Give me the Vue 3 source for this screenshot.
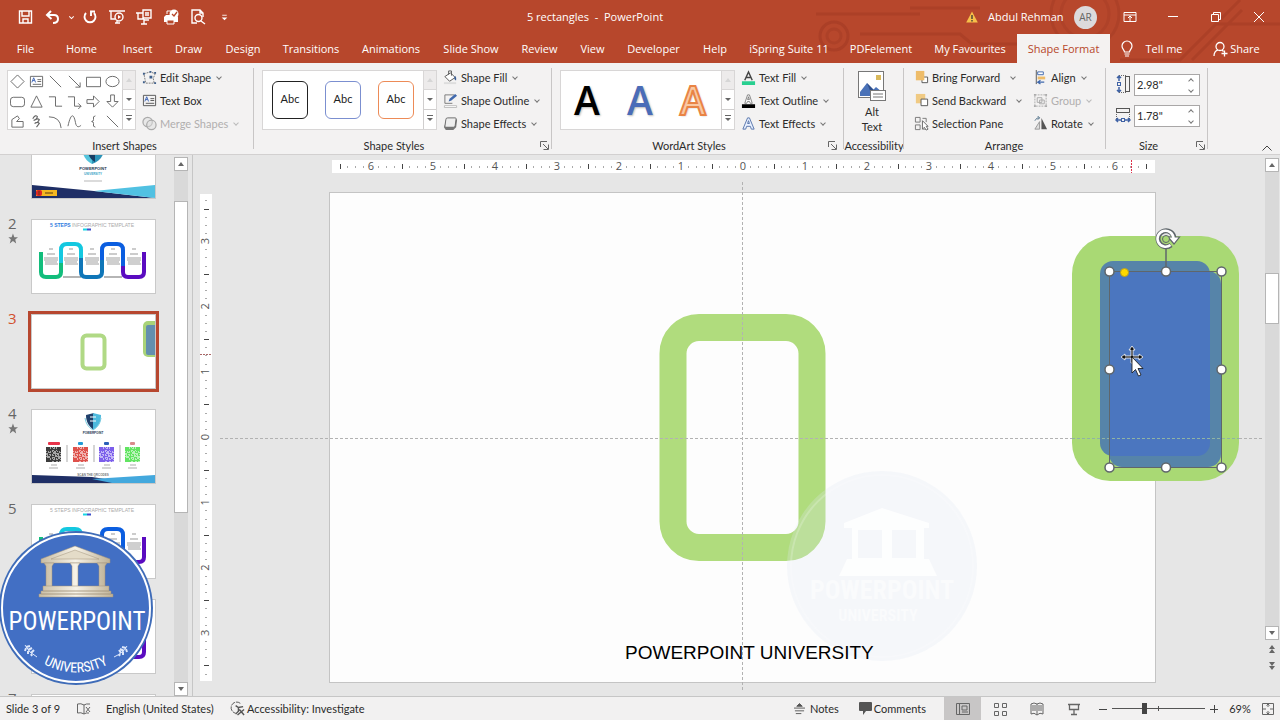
<template>
  <div class="app">
    <header class="title-area">
      <svg class="circuit" viewBox="0 0 480 63" fill="none" stroke="#983520" stroke-width="3" aria-hidden="true">
        <path d="M16 14H120M60 34H160l12 10H240M110 8h70M320 60H380l36-36h64M392 60l50-50M440 0l-20 20" opacity=".35" />
        <circle cx="34" cy="36" r="14" opacity=".4" />
        <circle cx="34" cy="36" r="7" opacity=".3" />
        <circle cx="285" cy="14" r="34" opacity=".3" />
        <circle cx="285" cy="14" r="24" opacity=".25" />
      </svg>

      <div class="title-bar">
        <div class="quick-access">
          <button v-for="q in quickAccess" :key="q.label" :class="q.size" :aria-label="q.label">
            <svg viewBox="0 0 16 16" v-html="q.icon"></svg>
          </button>
        </div>
        <div class="doc-title">5 rectangles&nbsp; -&nbsp; PowerPoint</div>
        <div class="account">
          <svg class="warning" viewBox="0 0 12 12">
            <path d="M6 .5L11.8 11.5H.2Z" fill="#f7c04a" />
            <path d="M6 4v4M6 9v1.5" stroke="#333" stroke-width="1.3" />
          </svg>
          <span class="user">Abdul Rehman</span>
          <span class="avatar">AR</span>
        </div>
        <div class="window-buttons">
          <button v-for="w in windowButtons" :key="w.label" :aria-label="w.label">
            <svg viewBox="0 0 14 14" v-html="w.icon"></svg>
          </button>
        </div>
      </div>

      <nav class="tabs">
        <button
          v-for="tab in tabs"
          :key="tab"
          :class="{ active: tab === activeTab }"
          @click="activeTab = tab"
        >
          {{ tab }}
        </button>
        <button class="tell-me">
          <svg viewBox="0 0 16 18" fill="none" stroke="#fff" stroke-width="1.2">
            <path d="M5.5 12c0-2-2.5-3-2.5-6a5 5 0 0 1 10 0c0 3-2.500 4-2.500 6zM5.500 14h5M6 16h4" />
          </svg>
          Tell me
        </button>
        <button class="share">
          <svg viewBox="0 0 16 16" fill="none" stroke="#fff" stroke-width="1.3">
            <circle cx="8" cy="5.500" r="4" />
            <path d="M2 15c0-4 2-5.500 4-6.200M10 9l1.500 1.500M12.500 9.500v6M9.500 12.500h6" />
          </svg>
          Share
        </button>
      </nav>
    </header>

    <section class="ribbon">
      <div class="group insert-shapes">
        <div class="group-body">
          <div class="gallery">
            <div class="shape-grid">
              <button v-for="(s, i) in shapes" :key="i" aria-label="Shape">
                <svg viewBox="0 0 16 16" fill="none" stroke="#666" v-html="s"></svg>
              </button>
            </div>
            <div class="gallery-scroll">
              <button disabled aria-label="Row up"><i class="up"></i></button>
              <button aria-label="Row down"><i class="down"></i></button>
              <button aria-label="More"><i class="more"></i></button>
            </div>
          </div>
          <div class="commands">
            <button v-for="c in shapeCommands" :key="c.label" :disabled="c.disabled">
              <svg class="icon" viewBox="0 0 16 16" v-html="c.icon"></svg>
              <span>{{ c.label }}</span>
              <i v-if="c.menu" class="chevron"></i>
            </button>
          </div>
        </div>
        <div class="group-label">Insert Shapes</div>
      </div>

      <div class="group shape-styles">
        <div class="group-body">
          <div class="gallery">
            <div class="style-row">
              <button class="style-box black">Abc</button>
              <button class="style-box blue">Abc</button>
              <button class="style-box orange">Abc</button>
            </div>
            <div class="gallery-scroll">
              <button disabled aria-label="Row up"><i class="up"></i></button>
              <button aria-label="Row down"><i class="down"></i></button>
              <button aria-label="More"><i class="more"></i></button>
            </div>
          </div>
          <div class="commands">
            <button v-for="c in styleCommands" :key="c.label">
              <svg class="icon" viewBox="0 0 16 16" v-html="c.icon"></svg>
              <span>{{ c.label }}</span>
              <i class="chevron"></i>
            </button>
          </div>
        </div>
        <div class="group-label">Shape Styles</div>
        <button class="launcher" aria-label="Format Shape">
          <svg viewBox="0 0 9 9" v-html="launcherIcon"></svg>
        </button>
      </div>

      <div class="group wordart">
        <div class="group-body">
          <div class="gallery">
            <div class="style-row letters">
              <button class="letter l-black">A</button>
              <button class="letter l-blue">A</button>
              <button class="letter l-orange">A</button>
            </div>
            <div class="gallery-scroll">
              <button disabled aria-label="Row up"><i class="up"></i></button>
              <button aria-label="Row down"><i class="down"></i></button>
              <button aria-label="More"><i class="more"></i></button>
            </div>
          </div>
          <div class="commands">
            <button v-for="c in textCommands" :key="c.label">
              <svg class="icon" viewBox="0 0 16 16" v-html="c.icon"></svg>
              <span>{{ c.label }}</span>
              <i class="chevron"></i>
            </button>
          </div>
        </div>
        <div class="group-label">WordArt Styles</div>
        <button class="launcher" aria-label="Format Text Effects">
          <svg viewBox="0 0 9 9" v-html="launcherIcon"></svg>
        </button>
      </div>

      <div class="group accessibility">
        <div class="group-body">
          <button class="alt-text">
            <svg viewBox="0 0 30 32">
              <rect x="1.500" y="1.500" width="25" height="26" fill="#fff" stroke="#777" />
              <rect x="19" y="5" width="5" height="5" fill="#d9b95c" />
              <path d="M3 26v-4l7-9 6 7 3-3 6 5v4z" fill="#4a72b8" />
              <path d="M10 13l5 13 2-6z" fill="#2e4f8c" />
              <rect x="13.500" y="20.500" width="15" height="10" fill="#fff" stroke="#777" />
              <path d="M16 24h10M16 27h10" stroke="#777" />
            </svg>
            <span>Alt<br />Text</span>
          </button>
        </div>
        <div class="group-label">Accessibility</div>
      </div>

      <div class="group arrange">
        <div class="group-body">
          <div class="commands order">
            <button v-for="c in orderCommands" :key="c.label">
              <svg class="icon" viewBox="0 0 16 16" v-html="c.icon"></svg>
              <span>{{ c.label }}</span>
              <i v-if="c.menu" class="chevron"></i>
            </button>
          </div>
          <div class="commands">
            <button v-for="c in alignCommands" :key="c.label" :disabled="c.disabled">
              <svg class="icon" viewBox="0 0 16 16" v-html="c.icon"></svg>
              <span>{{ c.label }}</span>
              <i class="chevron"></i>
            </button>
          </div>
        </div>
        <div class="group-label">Arrange</div>
      </div>

      <div class="group size">
        <div class="group-body sizes">
          <div class="size-row">
            <label for="shape-height" aria-label="Shape Height">
              <svg viewBox="0 0 16 18" fill="none">
                <path d="M4 1v5M2 3l2-2 2 2M4 12v5M2 15l2 2 2-2" stroke="#3f62a5" stroke-width="1.500" />
                <rect x="2.500" y="7.500" width="3" height="3" stroke="#3f62a5" />
                <path d="M4 .5h7M4 17.500h7" stroke="#666" stroke-dasharray="1 1" />
                <rect x="10.500" y="1.500" width="4" height="15" stroke="#555" />
              </svg>
            </label>
            <div class="spinner">
              <input id="shape-height" v-model="shapeHeight" type="text" />
              <div><i class="chevron flip"></i><i class="chevron"></i></div>
            </div>
          </div>
          <div class="size-row">
            <label for="shape-width" aria-label="Shape Width">
              <svg viewBox="0 0 16 18" fill="none">
                <rect x="1.500" y="2.500" width="13" height="4" stroke="#555" />
                <path d="M1.500 6v7M14.500 6v7" stroke="#666" stroke-dasharray="1 1" />
                <path d="M1 14h5M3 12l-2 2 2 2M10 14h5M13 12l2 2-2 2" stroke="#3f62a5" stroke-width="1.500" />
                <rect x="6.500" y="12.500" width="3" height="3" stroke="#3f62a5" />
              </svg>
            </label>
            <div class="spinner">
              <input id="shape-width" v-model="shapeWidth" type="text" />
              <div><i class="chevron flip"></i><i class="chevron"></i></div>
            </div>
          </div>
        </div>
        <div class="group-label">Size</div>
        <button class="launcher" aria-label="Size and Position">
          <svg viewBox="0 0 9 9" v-html="launcherIcon"></svg>
        </button>
      </div>

      <button class="collapse" aria-label="Collapse the Ribbon">
        <svg viewBox="0 0 10 6"><path d="M.5 5.500L5 1l4.500 4.500" fill="none" stroke="#444" /></svg>
      </button>
    </section>

    <main class="workspace">
      <aside class="slides-pane">
        <ol class="slides">
          <li v-for="n in 7" :key="n" :class="{ selected: n === currentSlide }">
            <div class="slide-no">
              <span v-if="n > 1 && n !== 6">{{ n }}</span>
              <svg v-if="n === 2 || n === 4" viewBox="0 0 12 12">
                <path d="M6.500.5L8 4.500h4L9 7l1 4.500-3.500-2.700L3 11.500 4.200 7 1.500 4.500H5zM0 5h2M.5 8h2" fill="#777" />
              </svg>
            </div>
            <button class="thumb" :aria-label="'Slide ' + n" @click="currentSlide = n">
              <svg v-if="n === 1" viewBox="0 0 123 73">
                <path d="M50 24h10v15c-6-3-9-8-10-15z" fill="#55c4dc" />
                <path d="M60 24h12c0 7-5 13-12 15z" fill="#2b93b8" />
                <path d="M55 24h8v13c-5-3-7-7-8-13z" fill="#173d63" />
                <text x="61" y="45" class="t-bold" font-size="4">POWERPOINT</text>
                <text x="61" y="50" class="t-bold t-cyan" font-size="3">UNIVERSITY</text>
                <path d="M52 56h18" stroke="#888" stroke-width=".6" />
                <path d="M0 60l62 6 61 7H0z" fill="#1f2f66" />
                <path d="M62 66l61-6v13z" fill="#51c1e2" />
                <rect x="4" y="65" width="21" height="6" fill="#f5b821" />
                <rect x="4" y="65" width="6" height="6" rx="2" fill="#e02424" />
                <path d="M7 66v4M13 68h8" stroke="#5a3a12" />
              </svg>

              <svg v-else-if="n === 2 || n === 5 || n === 6" viewBox="0 0 123 73">
                <text x="60" y="7" class="t-title" fill="#aaa">
                  <tspan :fill="n === 2 ? '#2f7de0' : '#aaa'" :font-weight="n === 2 ? 700 : 400">5 STEPS</tspan>
                  INFOGRAPHIC TEMPLATE
                </text>
                <path d="M51 9.500h4" stroke="#18d6e5" stroke-width="2" />
                <path d="M55 9.500h4" stroke="#3d4fc8" stroke-width="2" />
                <path d="M31 57h18M72 57h18" stroke="#b5b5b5" stroke-width="2" />
                <g fill="none" stroke-width="4">
                  <path d="M9 32v20q0 5 5 5h10q5 0 5-5v-10" stroke="#12bd7c" />
                  <path d="M29 43V30q0-6 6-6h8q6 0 6 6v10" stroke="#14c8e0" />
                  <path d="M49 38v14q0 5 5 5h11q5 0 5-5V38" stroke="#0f76b8" />
                  <path d="M70 40V30q0-6 6-6h9q6 0 6 6v18" stroke="#0b5ee0" />
                  <path d="M91 46v6q0 5 5 5h11q5 0 5-5V32" stroke="#5a0bc0" />
                </g>
                <g v-for="x in [12, 32, 53, 74, 95]" :key="x" fill="none">
                  <path :d="`M${x + 5} 29h4M${x + 3} 34h8`" stroke="#999" />
                  <path :d="`M${x} 38h14M${x} 40h14M${x + 1} 42h12M${x + 1} 44h13`" stroke="#777" stroke-width=".7" />
                </g>
              </svg>

              <svg v-else-if="n === 3" viewBox="0 0 123 73">
                <rect x="50.500" y="20.500" width="22" height="33" rx="4" fill="none" stroke="#b0d985" stroke-width="4" />
                <rect x="111" y="6" width="24" height="36" rx="5" fill="#a9d378" />
                <rect x="114" y="10" width="20" height="30" rx="2" fill="#638fae" />
              </svg>

              <svg v-else-if="n === 4" viewBox="0 0 123 73">
                <path d="M54 5l8-2v17c-6-4-8-9-8-15z" fill="#1f3f6b" />
                <path d="M61 3l8 2c0 7-2 11-8 15z" fill="#4db9dd" />
                <path d="M58 7h6M58 11h6" stroke="#fff" />
                <path d="M53 8q1 8 8 12 7-4 8-12" stroke="#79cbe0" fill="none" />
                <text x="61" y="24" class="t-bold" font-size="3">POWERPOINT</text>
                <g v-for="qr in qrCodes" :key="qr.x" :transform="`translate(${qr.x} 37)`">
                  <rect :x="qr.x === 14 ? 2 : 5" y="-5" :width="qr.x === 14 ? 12 : 5" height="3" rx="1" :fill="qr.tag" />
                  <rect width="15" height="15" :fill="qr.color" opacity=".4" />
                  <path :d="qrPath" :fill="qr.color" opacity=".8" />
                  <path d="M5 18h6M3 21h9" stroke="#888" stroke-width=".7" />
                </g>
                <path d="M35 35v17M62 35v17M88 35v17" stroke="#888" stroke-width=".7" />
                <text x="61" y="66" class="t-bold t-gray" font-size="3">SCAN THE QRCODES</text>
                <path d="M0 65l60 2 40 6H0z" fill="#1f2f66" />
                <path d="M60 69l63-4v8H80z" fill="#43a8dd" />
              </svg>
            </button>
          </li>
        </ol>
        <div class="scrollbar pane-scroll">
          <button aria-label="Scroll up"><i class="up"></i></button>
          <div class="track"><div class="handle"></div></div>
          <button aria-label="Scroll down"><i class="down"></i></button>
        </div>
      </aside>

      <section class="editor">
        <div class="ruler-h">
          <svg viewBox="0 0 826 13">
            <rect x="3" width="823" height="13" fill="#fff" />
            <path :d="hDots" stroke="#aaa" />
            <path :d="hTicks" stroke="#444" />
            <text v-for="n in 13" :key="n" :x="414 + (n - 7) * 62" y="10">{{ Math.abs(n - 7) }}</text>
            <path d="M802.500 0v13" stroke="#e0304a" stroke-dasharray="2 1" />
          </svg>
        </div>
        <div class="ruler-v">
          <svg viewBox="0 0 12 487">
            <rect width="12" height="487" fill="#fff" />
            <path :d="vDots" stroke="#aaa" />
            <path :d="vTicks" stroke="#444" />
            <text
              v-for="n in 7"
              :key="n"
              :transform="`translate(9 ${243 + (n - 4) * 65.3}) rotate(-90)`"
            >
              {{ Math.abs(n - 4) }}
            </text>
            <path d="M0 160.500h12" stroke="#a66" stroke-dasharray="2 1" />
          </svg>
        </div>
        <div class="stage">
          <svg class="slide" viewBox="0 0 826 490">
            <defs>
              <clipPath id="back-shape">
                <rect x="771" y="69" width="110" height="195" rx="13" />
              </clipPath>
            </defs>
            <rect x=".5" y=".5" width="826" height="490" fill="#fdfdfd" stroke="#c4c4c4" />

            <rect x="344" y="135.500" width="139" height="220" rx="26" fill="none" stroke="#b0dc7d" stroke-width="27" />
            <rect x="743" y="44" width="167" height="245" rx="38" fill="#a9d974" />
            <g fill="#5684a9">
              <rect x="771" y="69" width="110" height="195" rx="13" />
              <rect x="780" y="79" width="112" height="196" rx="13" />
            </g>
            <rect x="780" y="79" width="112" height="196" rx="13" fill="#4b76bf" clip-path="url(#back-shape)" />

            <!-- drawing guides -->
            <g fill="none" stroke="#b2b2b2" stroke-dasharray="3 2">
              <path d="M-109 246.500H743M910 246.500H935M413.500-10V498" />
              <path d="M743 246.500H910" stroke="#8fb3a4" />
            </g>

            <!-- watermark -->
            <g>
              <circle cx="553" cy="374" r="95" fill="#dfe7f3" opacity=".26" />
              <circle cx="553" cy="374" r="91" fill="none" stroke="#fff" stroke-width="2" opacity=".2" />
              <path
                d="M515 331l38-15 47 15v5h-5v31h5l8 17h-98l8-17h5v-31h-8zM529 338v28h24v-28zM563 338v28h24v-28z"
                fill="#fff"
                fill-rule="evenodd"
                opacity=".8"
              />
              <text x="553" y="407" class="mark" font-size="26">POWERPOINT</text>
              <text x="549" y="429" class="mark" font-size="16">UNIVERSITY</text>
            </g>

            <text x="296" y="467" class="caption">POWERPOINT UNIVERSITY</text>

            <!-- selection frame -->
            <g fill="none" stroke="#5f666b">
              <rect x="780.500" y="79.500" width="112" height="196" />
              <path d="M837 79V56" stroke-width="1.500" />
              <circle v-for="h in handles" :key="h.x + '-' + h.y" :cx="h.x" :cy="h.y" r="4.500" fill="#fff" stroke-width="1.500" />
              <circle cx="795.500" cy="80.500" r="4" fill="#ffd900" stroke="#b8a020" />
            </g>

            <!-- rotate handle: dark outline under a white arrow -->
            <g fill="none">
              <path d="M842 53a8 8 0 1 1 3-7" stroke="#5f666b" stroke-width="5" />
              <path d="M839 45h11.500l-5.500 7z" fill="#fff" stroke="#5f666b" stroke-width="1.200" />
              <path d="M841.500 53a8 8 0 1 1 3-7" stroke="#fff" stroke-width="2.600" />
              <circle cx="837" cy="47" r="3.500" fill="#a9d974" stroke="#5f666b" />
            </g>

            <!-- move pointer -->
            <g stroke="#fff" stroke-width=".8">
              <path
                d="M803 154l3 4h-2v6h6v-2l4 3-4 3v-2h-6v5h-2v-5h-6v2l-4-3 4-3v2h6v-6h-2z"
                fill="#111"
              />
              <path d="M803 165v16l3.500-3.500 3 6.500 2.500-1-3-6.500h5z" fill="#fff" stroke="#111" />
            </g>
          </svg>
        </div>
      </section>

      <div class="scrollbar canvas-scroll">
        <button aria-label="Scroll up"><i class="up"></i></button>
        <div class="track"><div class="handle"></div></div>
        <button aria-label="Scroll down"><i class="down"></i></button>
        <button class="page" aria-label="Previous Slide"><i class="up"></i><i class="up"></i></button>
        <button class="page" aria-label="Next Slide"><i class="down"></i><i class="down"></i></button>
      </div>

      <svg class="channel-logo" viewBox="0 0 154 156">
        <defs>
          <path id="logo-arc" d="M40 132Q76 153 112 132" />
          <linearGradient id="stone" x1="0" x2="1">
            <stop offset="0" stop-color="#c9bda4" />
            <stop offset=".5" stop-color="#f7f3e8" />
            <stop offset="1" stop-color="#bfb297" />
          </linearGradient>
        </defs>
        <circle cx="76" cy="78" r="77" fill="#3f6cb8" />
        <circle cx="76" cy="78" r="74" fill="#426fc4" stroke="#fff" stroke-width="2" />
        <g fill="url(#stone)" stroke="#a0937a" stroke-width=".5">
          <path d="M75 16l35 13v4H41v-4z" />
          <path d="M75 20l24 9H51z" fill="#e4dcc8" />
          <path d="M44 33h10l-2 3v21h-6V36zM70 33h10l-2 3v21h-6V36zM97 33h10l-2 3v21h-6V36z" />
          <path d="M43 56h66v5H43zM41 61h70v3H41zM39 64h74v3H39z" />
        </g>
        <text x="77" y="100" class="logo-name">POWERPOINT</text>
        <text class="logo-sub"><textPath href="#logo-arc" startOffset="50%">UNIVERSITY</textPath></text>
        <g stroke="#dce6fa" stroke-width="1" fill="none">
          <path d="M25 115q4 8 12 12M127 116q-4 7-13 11" />
          <path
            d="M26 117l4-1M28 120l4-2M31 123l3-3M26 118l-1 3M28 121l0 3M31 124l1 2M126 118l-4-1M124 121l-4-2M121 123l-2-3M126 119l1 3M123 122l0 3M120 124l-1 2"
            stroke-width="2"
          />
        </g>
      </svg>
    </main>

    <footer class="status-bar">
      <span class="page-count">Slide 3 of 9</span>
      <button class="spell" aria-label="Spelling">
        <svg viewBox="0 0 14 14" fill="none" stroke="#666">
          <path d="M7 3v9M7 3Q4 1 .5 2v9Q4 10 7 12M7 3q2-1.500 6-1M7 12q2-1.500 5-1M9 5l4 5M13 5L9 10" />
        </svg>
      </button>
      <button class="language">English (United States)</button>
      <button class="check">
        <svg viewBox="0 0 16 16" fill="none" stroke="#555">
          <path d="M11 2.500A6 6 0 1 0 6 13" stroke-dasharray="5 1" />
          <path d="M6 5l3 2 5-1M9 7v4l-3 3M10 9l5 6M15 9l-7 6" stroke-width="1.500" />
        </svg>
        Accessibility: Investigate
      </button>
      <button class="notes">
        <svg viewBox="0 0 12 12"><path d="M6 0l3 3H3zM0 5h12M1 8h10M2 11h6" fill="#555" stroke="#555" /></svg>
        Notes
      </button>
      <button class="comments">
        <svg viewBox="0 0 13 13"><path d="M1 0h11q1 0 1 1v7q0 1-1 1H7l-3 4V9H1Q0 9 0 8V1q0-1 1-1z" fill="#555" /></svg>
        Comments
      </button>
      <div class="views">
        <button v-for="v in views" :key="v.label" :class="{ on: v.on }" :aria-label="v.label">
          <svg viewBox="0 0 14 14" fill="none" stroke="#666" v-html="v.icon"></svg>
        </button>
      </div>
      <div class="zoom">
        <button aria-label="Zoom out"><svg viewBox="0 0 8 8"><path d="M0 4.500h8" stroke="#444" /></svg></button>
        <input v-model="zoomPos" type="range" min="0" max="100" aria-label="Zoom" />
        <button aria-label="Zoom in"><svg viewBox="0 0 8 8"><path d="M0 4.500h8M4.500 0v8" stroke="#444" /></svg></button>
        <button class="percent">69%</button>
        <button aria-label="Fit slide to window">
          <svg class="fit" viewBox="0 0 12 12" fill="none" stroke="#666">
            <path d="M.5.5h11v11H.5zM6 1v3M6 8v3M1 6h3M8 6h3M4.500 2.500L6 1l1.500 1.500M4.500 9.500L6 11l1.500-1.500" />
          </svg>
        </button>
      </div>
    </footer>
  </div>
</template>

<script setup>
import { ref } from "vue";

const activeTab = ref("Shape Format");
const currentSlide = ref(3);
const shapeHeight = ref('2.98"');
const shapeWidth = ref('1.78"');
const zoomPos = ref(34);

const tabs = [
  "File",
  "Home",
  "Insert",
  "Draw",
  "Design",
  "Transitions",
  "Animations",
  "Slide Show",
  "Review",
  "View",
  "Developer",
  "Help",
  "iSpring Suite 11",
  "PDFelement",
  "My Favourites",
  "Shape Format",
];

const line = 'fill="none" stroke="#fff" stroke-width="1.4"';

const quickAccess = [
  { label: "Save", icon: `<path d="M1.500 2h12v12h-12zM4 2v5h7V2M5 14v-4h5v4" ${line}/>` },
  { label: "Undo", icon: '<path d="M6 2L2 6l4.500 4M2.500 6H9q4 0 4 4t-5 4" fill="none" stroke="#fff" stroke-width="2"/>' },
  { label: "Undo menu", size: "narrow", icon: '<path d="M4 6l4 4 4-4" fill="none" stroke="#fff" stroke-width="1.8"/>' },
  { label: "Redo", icon: '<path d="M4 4a5.500 5.500 0 1 0 8 0M13 2.500H9V7" fill="none" stroke="#fff" stroke-width="1.900"/>' },
  { label: "From Beginning", icon: `<path d="M0 2h16M2 2v8h4M6 14h5M8 12v2" ${line}/><circle cx="10" cy="8" r="4" ${line}/><path d="M9 6l3 2-3 2z" fill="#fff"/>` },
  { label: "From Current Slide", icon: `<path d="M0 4h7M2 4v6h6M5 15h6M8 10v5M7 1h8v8H7zM9 4h4M9 6h4M8 11h5" ${line}/>` },
  { label: "Quick Print", icon: `<path d="M3 6h10l2 2v5H1V8z" fill="#fff"/><path d="M4 5V2h4M4 11h7v4H4z" fill="#b7472a" stroke="#fff"/><circle cx="11" cy="5" r="4.500" fill="#fff"/><path d="M9 5l2 2 3-4" fill="none" stroke="#b7472a" stroke-width="1.300"/>` },
  { label: "Print Preview", icon: `<path d="M7 14H2V1h8l3 3v4M10 1v3h3M11 12l4 3" ${line}/><circle cx="8.500" cy="9" r="3.500" ${line}/>` },
  { label: "Customize", size: "small", icon: '<path d="M4 4h8" stroke="#fff" stroke-width="1.500"/><path d="M3 8h10l-5 5z" fill="#fff"/>' },
];

const windowButtons = [
  { label: "Ribbon Display Options", icon: '<path d="M1 2.500h12v9H1zM1 5h12M7 11V6M5 8l2-2 2 2" fill="none" stroke="#fff"/>' },
  { label: "Minimize", icon: '<path d="M2 6.500h10" stroke="#fff"/>' },
  { label: "Restore", icon: '<path d="M2.500 4.500h7v7h-7zM4.500 4V2.500h7v7H10" fill="none" stroke="#fff"/>' },
  { label: "Close", icon: '<path d="M2 2l10 10M12 2L2 12" stroke="#fff"/>' },
];

const shapes = [
  '<path d="M8 1l7 7-7 7-7-7z"/>',
  '<path d="M1.500 2.500h13v11h-13zM9 6h4M9 8h4M4 11h9"/><path d="M3 9l2-5 2 5M4 7h2" stroke="#3b62b5"/>',
  '<path d="M2 2l12 12"/>',
  '<path d="M2 2l12 12M14 9v5H9"/>',
  '<path d="M.5 3.500h15v10H.5z"/>',
  '<ellipse cx="8" cy="8" rx="7" ry="5.500"/>',
  '<rect x=".5" y="3.500" width="15" height="10" rx="3"/>',
  '<path d="M8 2l6 12H2z"/>',
  '<path d="M1 3h7v10h7"/>',
  '<path d="M1 3h7v10h7M12 10l3 3-3 3"/>',
  '<path d="M1 6h7V2l6 6-6 6v-4H1z"/>',
  '<path d="M6 1v7H2l6 6 6-6h-4V1z"/>',
  '<path d="M2 14V6l6-4 2 3-3 3h7v6z"/>',
  '<path d="M4 5q3-5 5-2-1 3-4 4 4-3 6-1-1 3-5 4 3-2 5 0l-3 4" stroke-width="1.200"/>',
  '<path d="M1 3q12 0 13 12"/>',
  '<path d="M1 13C5-5 8 3 9 9s4 5 6 3"/>',
  '<path d="M10 2Q7 2 8 6q0 2-2 2 2 0 2 2-1 4 2 4"/>',
  '<path d="M2 2l12 12"/>',
];

const shapeCommands = [
  { label: "Edit Shape", menu: true, icon: '<path d="M2 4l7-2 5 2-2 5 1 5H4z" fill="none" stroke="#777" stroke-dasharray="2 1"/><path d="M1 3h2v2H1zM8 1h2v2H8zM13 2h2v2h-2zM1 12h2v2H1zM13 13h2v2h-2zM8 6h3v3H8z" fill="#3f5f8a"/>' },
  { label: "Text Box", icon: '<path d="M1.500 2.500h13v11h-13zM9 6h4M9 8h4M4 11h9" fill="none" stroke="#555"/><path d="M3 9l2-5 2 5M4 7h2" fill="none" stroke="#3b62b5"/>' },
  { label: "Merge Shapes", menu: true, disabled: true, icon: '<g fill="#ddd" fill-opacity=".5" stroke="#aaa" stroke-width="1.300"><circle cx="6" cy="6.500" r="5"/><circle cx="10" cy="9.500" r="5"/></g>' },
];

const styleCommands = [
  { label: "Shape Fill", icon: '<path d="M2 7l6-4 5 5-6 4zM6 5V1h3v5" fill="#fff" stroke="#555"/><path d="M13 6q2 3 1 5-2 0-2-3z" fill="#3b5e96"/><path d="M1 13h13v2H1z" fill="#ddd"/>' },
  { label: "Shape Outline", icon: '<path d="M12 2H2v9h8" fill="none" stroke="#777"/><path d="M6 9l1-3 6-5 2 2-6 5z" fill="#4069ad"/><path d="M1.500 13.500h13v2h-13z" fill="#fff" stroke="#bbb"/>' },
  { label: "Shape Effects", icon: '<path d="M4 4l8-2 3 2-1 8-3 3H3l-2-3z" fill="#777"/><path d="M5 2h8q1 0 1 1l-1 7q0 2-2 2H3q-1 0-1-1l1-7q0-2 2-2z" fill="#eee" stroke="#666"/>' },
];

const textCommands = [
  { label: "Text Fill", icon: '<path d="M1 12h14v4H1z" fill="#29cf90"/><path d="M4 11l4-9 4 9M5.500 8h5" fill="none" stroke="#444" stroke-width="1.500"/>' },
  { label: "Text Outline", icon: '<path d="M1 12h14v4H1z" fill="#000"/><path d="M4 11l3-9h2l3 9h-2l-1-2H7l-1 2zM7 7h2L8 4z" fill="#fff" stroke="#666" stroke-width=".8"/>' },
  { label: "Text Effects", icon: '<path d="M2 14L7 2h2l5 12h-3l-1-3H6l-1 3zM7 8h2L8 5z" fill="#e8f0ff" stroke="#5674ab"/>' },
];

const orderCommands = [
  { label: "Bring Forward", menu: true, icon: '<path d="M8.500 7.500h6v6h-6z" fill="#fff" stroke="#555"/><path d="M2 1h9v10H2z" fill="#eebc69"/>' },
  { label: "Send Backward", menu: true, icon: '<path d="M2 1h10v10H2z" fill="#f0ca83"/><path d="M7.500 6.500h7v7h-7z" fill="#fff" stroke="#555"/>' },
  { label: "Selection Pane", icon: '<path d="M1.500 1.500h5v5h-5zM1.500 9.500h5v5h-5zM9 2.500h4v4M9 14h4" fill="none" stroke="#777"/><path d="M9 5v9l2-2 2 3 2-1-2-3h2z" fill="#fff" stroke="#666"/>' },
];

const alignCommands = [
  { label: "Align", icon: '<path d="M3.500 0v15" stroke="#555"/><path d="M5 2h6v3H5z" fill="#fff" stroke="#4069ad"/><path d="M5 7h8v3H5z" fill="#eebc69"/><path d="M5 13h7M8 11l-3 2 3 2" fill="none" stroke="#4069ad" stroke-width="1.300"/>' },
  { label: "Group", disabled: true, icon: '<path d="M2 2h12v12H2z" fill="none" stroke="#aaa" stroke-dasharray="2 1"/><path d="M4.500 5h5v5h-5zM7 7.500h5v4H7z" fill="none" stroke="#aaa"/><path d="M1 1h2v2H1zM13 1h2v2h-2zM1 13h2v2H1zM13 13h2v2h-2z" fill="#aaa"/>' },
  { label: "Rotate", icon: '<path d="M2 14L7 6v8z" fill="#ddd" stroke="#999"/><path d="M9 2v12h6z" fill="#555"/><path d="M2 5q2-4 5-3M5 0l2 2-2 2" fill="none" stroke="#4f6f87"/>' },
];

const launcherIcon = '<path d="M.5 6V.5H7M3 3l5 5M8.500 3.500v5h-5" fill="none" stroke="#666"/>';

const views = [
  { label: "Normal", on: true, icon: '<path d="M.5 1.500h13v11H.5zM3.500 2v10M6 4h5v4H6zM6 10h6"/>' },
  { label: "Slide Sorter", icon: '<path d="M1.500 1.500h4v4h-4zM9.500 1.500h4v4h-4zM1.500 9.500h4v4h-4zM9.500 9.500h4v4h-4z"/>' },
  { label: "Reading View", icon: '<path d="M7 2v11M7 2Q4 0 1 2v10q3-2 6 1 3-3 6-1V2Q10 0 7 2M2 4h4M2 6h4M2 8h4M8 4h4M8 6h4M8 8h4"/>' },
  { label: "Slide Show", icon: '<path d="M1 2.500h12M2.500 2.500v5h9v-5M7 8v4M4 12.500h6" stroke-width="1.300"/>' },
];

const handles = [
  { x: 780.5, y: 79.5 },
  { x: 837, y: 79.5 },
  { x: 892.5, y: 79.5 },
  { x: 780.5, y: 177.5 },
  { x: 892.5, y: 177.5 },
  { x: 780.5, y: 275.5 },
  { x: 837, y: 275.5 },
  { x: 892.5, y: 275.5 },
];

const qrCodes = [
  { x: 14, color: "#222222", tag: "#e8344a" },
  { x: 41, color: "#d93a32", tag: "#229bd6" },
  { x: 67, color: "#6a48e8", tag: "#2b5fb8" },
  { x: 93, color: "#4be04b", tag: "#d98b8b" },
];

// small block pattern shared by all the codes
let qrPath = "";
for (let r = 0; r < 15; r++) {
  for (let c = 0; c < 15; c++) {
    const corner = (r < 4 || r > 10) && (c < 4 || c > 10) && !(r > 10 && c > 10);
    if (corner || (r * 7 + c * 5 + r * c * 3) % 11 < 5) {
      qrPath += `M${c} ${r}h1v1h-1z`;
    }
  }
}

// ruler marks: a dot per eighth of an inch, a tick per half
let hDots = "";
let hTicks = "";
for (let i = -52; i <= 52; i++) {
  const x = 413.5 + i * 7.75;
  if (i % 8 === 0) continue;
  if (i % 4 === 0) hTicks += `M${Math.round(x) + 0.5} 4v5`;
  else hDots += `M${Math.round(x) + 0.5} 6v2`;
}

let vDots = "";
let vTicks = "";
for (let i = -29; i <= 29; i++) {
  const y = Math.round(243 + i * 8.16) + 0.5;
  if (i % 8 === 0) continue;
  if (i % 4 === 0) vTicks += `M4 ${y}h5`;
  else vDots += `M5 ${y}h2`;
}
</script>

<style>
body {
  margin: 0;
}
</style>

<style scoped>
* {
  box-sizing: border-box;
}
.app {
  display: flex;
  flex-direction: column;
  height: 100vh;
  overflow: hidden;
  background: #e6e6e6;
  color: #2b2b2b;
  font-family: "Open Sans", "Noto Sans", sans-serif;
  font-size: 11px;
  line-height: 14px;
}
button,
input {
  font: inherit;
  color: inherit;
}
button {
  display: flex;
  align-items: center;
  justify-content: center;
  padding: 0;
  border: 0;
  background: none;
  white-space: nowrap;
}
svg {
  display: block;
  flex: none;
}

/* Title bar */
.title-area {
  position: relative;
  flex: none;
  background: #b7472c;
  color: #fff;
}
.circuit {
  position: absolute;
  top: 0;
  right: 0;
  width: 480px;
  height: 63px;
}
.title-bar {
  position: relative;
  display: flex;
  align-items: center;
  height: 34px;
}
.quick-access {
  display: flex;
  width: 238px;
  padding-left: 12px;
}
.quick-access button {
  width: 27px;
}
.quick-access .narrow {
  width: 10px;
}
.quick-access svg {
  width: 16px;
  height: 16px;
}
.quick-access .narrow svg,
.quick-access .small svg {
  width: 9px;
  height: 9px;
}
.doc-title {
  flex: 1;
  text-align: center;
}
.account {
  display: flex;
  align-items: center;
  gap: 10px;
  width: 142px;
  margin-left: 14px;
}
.warning {
  width: 12px;
  height: 12px;
}
.user {
  flex: 1;
  white-space: nowrap;
}
.avatar {
  width: 23px;
  height: 23px;
  margin-right: 11px;
  border-radius: 50%;
  background: #dcdadc;
  color: #666;
  font-size: 10px;
  line-height: 23px;
  text-align: center;
}
.window-buttons {
  display: flex;
}
.window-buttons button {
  width: 43px;
  height: 30px;
}
.window-buttons svg {
  width: 14px;
  height: 14px;
}

/* Tabs */
.tabs {
  position: relative;
  display: grid;
  grid-template-columns: 51px 61px 51px 51px 58px 78px 82px 78px 59px 47px 75px 48px 100px 84px 94px 93px 82px 1fr;
  height: 29px;
}
.tabs button.active {
  background: #f4f2f1;
  color: #b7472a;
}
.tabs .tell-me {
  gap: 10px;
}
.tabs .share {
  gap: 2px;
}
.tell-me svg {
  width: 16px;
  height: 18px;
}
.share svg {
  width: 16px;
  height: 16px;
}

/* Ribbon */
.ribbon {
  position: relative;
  display: flex;
  flex: none;
  height: 92px;
  background: #f3f2f2;
  border-bottom: 1px solid #d2d0d0;
}
.ribbon,
.status-bar {
  font-family: Lato, "Open Sans", sans-serif;
}
.group {
  position: relative;
  display: flex;
  flex-direction: column;
  justify-content: space-between;
  padding: 3px 0 0;
}
.group::after {
  content: "";
  position: absolute;
  top: 5px;
  right: 0;
  bottom: 5px;
  border-right: 1px solid #c8c6c6;
}
.group-body {
  display: flex;
  height: 70px;
  padding-top: 4px;
  gap: 6px;
}
.group-label {
  text-align: center;
  line-height: 16px;
}
.insert-shapes {
  width: 254px;
  padding-left: 7px;
}
.shape-styles {
  width: 298px;
  padding-left: 8px;
}
.wordart {
  width: 292px;
  padding-left: 8px;
}
.accessibility {
  width: 60px;
}
.arrange {
  width: 202px;
  padding-left: 10px;
}
.size {
  width: 102px;
  padding-left: 9px;
}
.insert-shapes .group-label,
.arrange .group-label {
  padding-right: 12px;
}
.shape-styles .group-label,
.wordart .group-label,
.size .group-label {
  padding-right: 26px;
}
.launcher {
  position: absolute;
  right: 3px;
  bottom: 4px;
}
.wordart .launcher {
  right: 7px;
}
.launcher svg {
  width: 9px;
  height: 9px;
}
.gallery {
  display: flex;
  height: 60px;
  border: 1px solid #d8d6d6;
  background: #fff;
}
.shape-grid {
  display: grid;
  grid-template-columns: repeat(6, 19px);
  grid-auto-rows: 20px;
}
.shape-grid svg {
  width: 15px;
  height: 15px;
}
.gallery-scroll {
  display: grid;
  grid-template-rows: 1fr 1fr 1fr;
  width: 13px;
}
.gallery-scroll button {
  border-left: 1px solid #d0cece;
  border-bottom: 1px solid #d0cece;
}
.gallery-scroll button:disabled {
  background: #e9e7e7;
  opacity: 0.8;
}
.gallery-scroll button:last-child {
  border-bottom: 0;
}
.up,
.down,
.more {
  border: 3px solid transparent;
}
.up {
  border-top: 0;
  border-bottom: 4px solid #666;
}
.down {
  border-bottom: 0;
  border-top: 4px solid #666;
}
.gallery-scroll .up {
  border-bottom-color: #ccc;
}
.gallery-scroll .down,
.more {
  border-bottom: 0;
  border-top: 3px solid #666;
}
.more {
  position: relative;
}
.more::before {
  content: "";
  position: absolute;
  top: -6px;
  left: -3px;
  width: 6px;
  border-top: 1px solid #666;
}
.commands {
  display: flex;
  flex-direction: column;
  height: 69px;
  margin-top: -4px;
}
.commands button {
  flex: none;
  justify-content: flex-start;
  height: 23px;
  gap: 3px;
}
.commands .icon {
  width: 15px;
  height: 15px;
}
button:disabled {
  color: #b1afaf;
}
.chevron {
  width: 4px;
  height: 4px;
  margin: -2px 0 0 3px;
  border: solid #777;
  border-width: 0 1px 1px 0;
  transform: rotate(45deg);
}
button:disabled .chevron {
  border-color: #bbb;
}
.style-row {
  display: flex;
  align-items: center;
  gap: 17px;
  width: 160px;
  padding-left: 9px;
}
.style-box {
  width: 36px;
  height: 38px;
  padding-bottom: 3px;
  border: 1px solid #222;
  border-radius: 6px;
  color: #222;
}
.style-box.blue {
  border-color: #7b8fd0;
}
.style-box.orange {
  border-color: #ed8b57;
}
.letters {
  padding-left: 8px;
}
.letter {
  width: 36px;
  font-family: "Open Sans", sans-serif;
  font-size: 39px;
  font-weight: 600;
  line-height: 40px;
  text-shadow: 1px 1px 2px #bbb;
}
.l-black {
  color: #000;
}
.l-blue {
  color: #4a6cb8;
}
.l-orange {
  color: #f9c9a4;
  -webkit-text-stroke: 2px #e98445;
}
.alt-text {
  flex: 1;
  flex-direction: column;
  justify-content: flex-start;
  gap: 2px;
  padding-right: 4px;
  line-height: 15px;
}
.alt-text svg {
  width: 30px;
  height: 32px;
}
.order {
  width: 113px;
}
.order .chevron {
  margin-left: 8px;
}
.sizes {
  flex-direction: column;
  gap: 9px;
  padding: 8px 0 0;
}
.size-row {
  display: flex;
  gap: 3px;
}
.size-row label svg {
  width: 16px;
  height: 20px;
}
.spinner {
  display: flex;
  align-items: center;
  width: 66px;
  height: 22px;
  border: 1px solid #a9a7a7;
  background: #fff;
}
.spinner input {
  flex: 1;
  min-width: 0;
  padding: 0 2px;
  border: 0;
  outline: none;
  background: none;
}
.spinner div {
  display: flex;
  flex-direction: column;
  gap: 7px;
  padding: 3px 6px 0 0;
}
.chevron.flip {
  transform: rotate(225deg);
}
.collapse {
  position: absolute;
  right: 8px;
  bottom: 3px;
}
.collapse svg {
  width: 10px;
  height: 6px;
}

/* Workspace */
.workspace {
  position: relative;
  display: flex;
  flex: 1;
  min-height: 0;
  overflow: hidden;
  border-bottom: 1px solid #c6c6c6;
}
.slides-pane {
  display: flex;
  flex: none;
  justify-content: space-between;
  width: 193px;
  padding-right: 4px;
  border-right: 1px solid #c6c6c6;
}
.slides {
  display: flex;
  flex-direction: column;
  gap: 20px;
  margin: -31px 0 0;
  padding: 0;
  list-style: none;
}
.slides li {
  display: flex;
}
.slide-no {
  width: 31px;
  padding-left: 8px;
  color: #666;
  font-size: 15px;
  line-height: 8px;
}
.slide-no svg {
  width: 11px;
  height: 11px;
  margin: 6px 0 0 -1px;
}
.selected .slide-no {
  color: #d2512f;
}
.thumb {
  width: 125px;
  height: 75px;
  border: 1px solid #c9c9c9;
  background: #fff;
}
.thumb svg {
  width: 100%;
  height: 100%;
}
.selected .thumb {
  outline: 3px solid #b7472f;
}
.t-bold {
  fill: #22354f;
  font-family: "Liberation Sans", sans-serif;
  font-weight: 700;
  text-anchor: middle;
}
.t-cyan {
  fill: #3aa5c8;
}
.t-gray {
  fill: #777;
}
.t-title {
  font-family: "Liberation Sans", sans-serif;
  font-size: 5px;
  text-anchor: middle;
}
.scrollbar {
  display: flex;
  flex: none;
  flex-direction: column;
  width: 14px;
  background: #d9d9d9;
}
.scrollbar button {
  height: 14px;
  border: 1px solid #b5b5b5;
  background: #fff;
}
.scrollbar .track {
  flex: 1;
}
.handle {
  border: 1px solid #b5b5b5;
  background: #fff;
}
.pane-scroll {
  margin: 2px 0 0;
}
.pane-scroll .handle {
  height: 61%;
  margin-top: 30px;
}
.canvas-scroll {
  margin: 3px 1px 22px 0;
}
.canvas-scroll .handle {
  height: 51px;
  margin-top: 101px;
}
.scrollbar .page {
  flex-direction: column;
  height: 17px;
  border: 0;
  background: #e6e6e6;
}

/* Editor */
.editor {
  display: grid;
  flex: 1;
  grid-template-columns: 27px 1fr;
  grid-template-rows: 27px 1fr;
  min-width: 0;
}
.ruler-h {
  grid-column: 2;
  padding: 5px 110px 0 109px;
}
.ruler-h svg {
  width: 100%;
  overflow: visible;
}
.ruler-v {
  padding: 12px 0 0 7px;
}
.ruler-v svg {
  width: 12px;
  overflow: visible;
}
.ruler-h text,
.ruler-v text {
  fill: #555;
  font-size: 11px;
  text-anchor: middle;
}
.stage {
  padding: 10px 110px 0 109px;
}
.slide {
  width: 100%;
  overflow: visible;
}
.caption {
  fill: #000;
  font-family: "Liberation Sans", Arial, sans-serif;
  font-size: 19px;
}
.mark {
  fill: #fff;
  font-family: "Roboto Condensed", Roboto, sans-serif;
  font-weight: 700;
  opacity: 0.5;
  text-anchor: middle;
}

/* Channel logo over the lower left corner */
.channel-logo {
  position: absolute;
  bottom: 10px;
  left: 0;
  width: 154px;
  height: 156px;
}
.logo-name,
.logo-sub {
  fill: #fff;
  font-family: "Roboto Condensed", Roboto, "Liberation Sans", sans-serif;
  text-anchor: middle;
}
.logo-name {
  font-size: 25px;
}
.logo-sub {
  font-size: 14px;
}

/* Status bar */
.status-bar {
  display: flex;
  flex: none;
  align-items: center;
  height: 23px;
  background: #f2f1f1;
}
.page-count {
  width: 77px;
  padding-left: 6px;
}
.spell {
  width: 14px;
}
.spell svg {
  width: 14px;
  height: 14px;
}
.language {
  width: 139px;
  padding-left: 15px;
  justify-content: flex-start;
}
.check {
  gap: 2px;
}
.check svg {
  width: 15px;
  height: 15px;
}
.notes {
  gap: 5px;
  margin-left: auto;
}
.notes svg {
  width: 11px;
  height: 12px;
}
.comments {
  gap: 2px;
  margin: 0 18px 0 20px;
}
.comments svg {
  width: 13px;
  height: 13px;
}
.views {
  display: flex;
  align-self: stretch;
}
.views button {
  width: 37px;
}
.views .on {
  background: #c8c6c6;
}
.views svg {
  width: 14px;
  height: 14px;
}
.zoom {
  display: flex;
  align-items: center;
  gap: 5px;
  padding: 0 6px 0 7px;
}
.zoom svg {
  width: 8px;
  height: 8px;
}
.zoom .fit {
  width: 12px;
  height: 12px;
}
.zoom input {
  width: 93px;
  height: 12px;
  margin: 0;
  appearance: none;
  background:
    linear-gradient(#555, #555) center / 1px 5px no-repeat,
    linear-gradient(#555, #555) center / 100% 1px no-repeat;
}
.zoom input::-webkit-slider-thumb {
  appearance: none;
  width: 5px;
  height: 11px;
  background: #444;
}
.percent {
  width: 34px;
}
</style>
